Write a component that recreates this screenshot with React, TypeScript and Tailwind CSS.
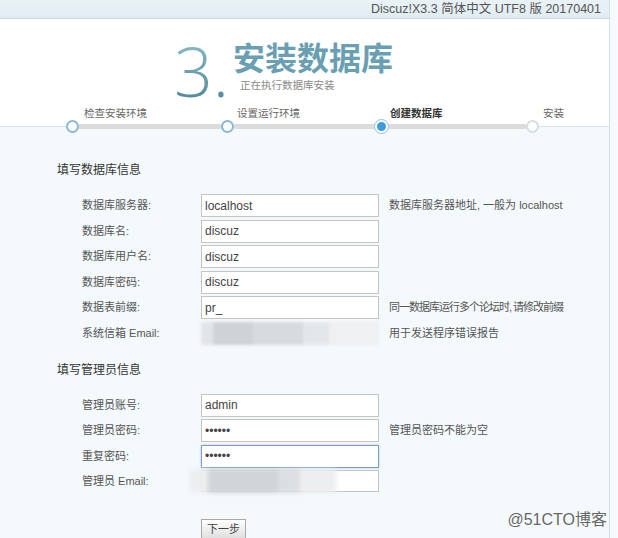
import React from "react"

const FONT = "font-['Liberation_Sans','Noto_Sans_CJK_SC',sans-serif]"

type Row = {
    label: string
    value?: string
    hint?: string
    tight?: boolean
    kind?: "text" | "password" | "blur" | "blurBox"
    focused?: boolean
}

const dbRows: Row[] = [
    { label: "数据库服务器:", value: "localhost", hint: "数据库服务器地址, 一般为 localhost" },
    { label: "数据库名:", value: "discuz" },
    { label: "数据库用户名:", value: "discuz" },
    { label: "数据库密码:", value: "discuz" },
    { label: "数据表前缀:", value: "pr_", hint: "同一数据库运行多个论坛时, 请修改前缀", tight: true },
    { label: "系统信箱 Email:", kind: "blur", hint: "用于发送程序错误报告" },
]

const adminRows: Row[] = [
    { label: "管理员账号:", value: "admin" },
    { label: "管理员密码:", value: "123456", kind: "password", hint: "管理员密码不能为空" },
    { label: "重复密码:", value: "123456", kind: "password", focused: true },
    { label: "管理员 Email:", kind: "blurBox" },
]

function Field({ row }: { row: Row }) {
    if (row.kind === "blur") {
        return (
            <div className="w-[178px] h-[23px] flex blur-[1.5px]">
                <div className="w-[12px] bg-[#e2e5e8]" />
                <div className="w-[40px] bg-[#cfd3d7]" />
                <div className="w-[50px] bg-[#d8dbde]" />
                <div className="w-[26px] bg-[#e4e7ea]" />
                <div className="flex-1 bg-[#eef0f2]" />
            </div>
        )
    }
    if (row.kind === "blurBox") {
        return (
            <div className="relative w-[178px] h-[22px] border border-[#c4c4c4] bg-white">
                <div className="absolute left-[-12px] top-[-2px] w-[146px] h-[24px] flex blur-[2px]">
                    <div className="w-[18px] bg-[#eceef0]" />
                    <div className="w-[70px] bg-[#d2d5d8]" />
                    <div className="w-[22px] bg-[#dcdfe2]" />
                    <div className="flex-1 bg-[#eceef0]" />
                </div>
            </div>
        )
    }
    return (
        <input
            type={row.kind === "password" ? "password" : "text"}
            defaultValue={row.value}
            readOnly
            className={`w-[178px] h-[23px] px-[3px] bg-white text-[12px] text-[#444] outline-none border ${row.focused ? "border-[#7d9fc6] shadow-[0_0_2px_#a9c3e0]" : "border-[#c4c4c4]"} ${FONT}`}
        />
    )
}

function FormRows({ rows }: { rows: Row[] }) {
    return (
        <div className="pl-[25px]">
            {rows.map((row) => (
                <div key={row.label} className="h-[25.6px] flex items-start">
                    <div className="w-[119px] text-[11px] leading-[23px] text-[#555]">{row.label}</div>
                    <Field row={row} />
                    {row.hint && (
                        <div className={`ml-[10px] text-[11px] leading-[23px] text-[#555] ${row.tight ? "tracking-[-1px]" : ""}`}>
                            {row.hint}
                        </div>
                    )}
                </div>
            ))}
        </div>
    )
}

function Dot({ state }: { state: "done" | "current" | "todo" }) {
    if (state === "current") {
        return (
            <div className="w-[15px] h-[15px] shrink-0 rounded-full border border-[#8dc2e6] bg-white p-[2px]">
                <div className="w-full h-full rounded-full bg-[#3d9be0]" />
            </div>
        )
    }
    return (
        <div className={`w-[13px] h-[13px] shrink-0 rounded-full border-2 bg-white ${state === "done" ? "border-[#86b8d6]" : "border-[#d4dde2]"}`} />
    )
}

function Steps() {
    return (
        <>
            <div className="flex pl-[84px] h-[11px] text-[10.5px] leading-[11px] text-[#666]">
                <span className="w-[153px]">检查安装环境</span>
                <span className="w-[153px]">设置运行环境</span>
                <span className="w-[153px] text-[#333] font-bold">创建数据库</span>
                <span>安装</span>
            </div>
            <div className="flex items-center h-[14px] bg-[linear-gradient(to_bottom,#ffffff_50%,#f4f9fc_50%)]">
                <div className="w-[65.5px] h-px bg-[#d3e4ee]" />
                <Dot state="done" />
                <div className="w-[142px] h-[5px] bg-[#dcdcdc]" />
                <Dot state="done" />
                <div className="w-[140px] h-[5px] bg-[#dcdcdc]" />
                <Dot state="current" />
                <div className="w-[137px] h-[5px] bg-[#dcdcdc]" />
                <Dot state="todo" />
                <div className="flex-1 h-px bg-[#d3e4ee]" />
            </div>
        </>
    )
}

export default function App() {
    return (
        <div className={`w-[618px] h-[538px] overflow-hidden bg-[#f6fafc] ${FONT}`}>
            <div className="relative w-[610px] h-full border-r border-[#d2e2ec] bg-[#f4f9fc]">
                <div className="h-[19px] bg-[linear-gradient(to_bottom,#eaf2f7,#e1ecf2)] border-b border-[#c8dae5] flex items-center justify-end pr-[8px] text-[12.5px] text-[#555]">
                    Discuz!X3.3 简体中文 UTF8 版 20170401
                </div>
                <div className="h-px bg-white" />
                <div className="bg-white">
                    <div className="h-[88px] flex pl-[174px] pt-[17px]">
                        <div className="text-[68px] leading-[68px] font-light font-['Open_Sans',sans-serif] bg-[linear-gradient(to_bottom,#8dbdca,#4a8497)] bg-clip-text text-transparent">
                            3.
                        </div>
                        <div className="ml-[4px] pt-[2px]">
                            <div className="text-[32px] leading-[34px] font-bold text-[#6a9fb3] font-['Noto_Sans_CJK_SC',sans-serif]">
                                安装数据库
                            </div>
                            <div className="ml-[7px] mt-[6px] text-[10.5px] leading-[12px] text-[#8a8a8a]">正在执行数据库安装</div>
                        </div>
                    </div>
                    <Steps />
                </div>
                <div className="pl-[57px] pt-[29px]">
                    <div className="h-[16px] text-[12px] leading-[16px] text-[#333]">填写数据库信息</div>
                    <div className="mt-[16px]">
                        <FormRows rows={dbRows} />
                    </div>
                    <div className="mt-[14px] h-[16px] text-[12px] leading-[16px] text-[#333]">填写管理员信息</div>
                    <div className="mt-[16px]">
                        <FormRows rows={adminRows} />
                    </div>
                    <div className="pl-[144px] mt-[20px]">
                        <button className="w-[45px] h-[21px] border border-[#a9a9a9] bg-[linear-gradient(to_bottom,#ffffff,#dedede)] text-[11px] text-[#444]">
                            下一步
                        </button>
                    </div>
                </div>
                <div className="absolute right-[2px] bottom-[6px] text-[16px] text-[#666] [text-shadow:0_0_2px_#fff]">
                    @51CTO博客
                </div>
            </div>
        </div>
    )
}
